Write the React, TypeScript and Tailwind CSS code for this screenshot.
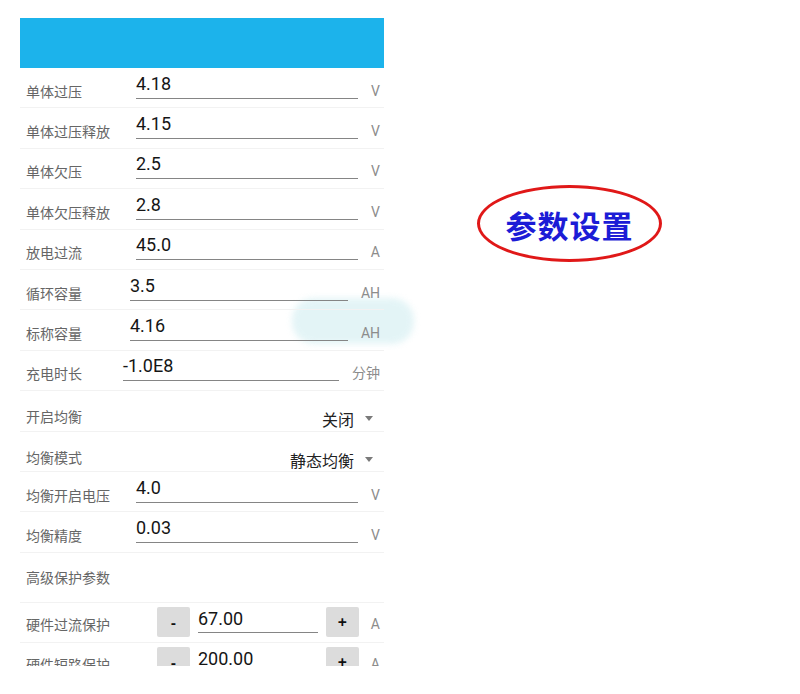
import React from 'react'

type FieldRow = {
  kind: 'field'
  label: string
  value: string
  unit: string
  labelW: number
}

type SelectRow = {
  kind: 'select'
  label: string
  value: string
}

type Row = FieldRow | SelectRow

const rows: Row[] = [
  { kind: 'field', label: '单体过压', value: '4.18', unit: 'V', labelW: 116 },
  { kind: 'field', label: '单体过压释放', value: '4.15', unit: 'V', labelW: 116 },
  { kind: 'field', label: '单体欠压', value: '2.5', unit: 'V', labelW: 116 },
  { kind: 'field', label: '单体欠压释放', value: '2.8', unit: 'V', labelW: 116 },
  { kind: 'field', label: '放电过流', value: '45.0', unit: 'A', labelW: 116 },
  { kind: 'field', label: '循环容量', value: '3.5', unit: 'AH', labelW: 110 },
  { kind: 'field', label: '标称容量', value: '4.16', unit: 'AH', labelW: 110 },
  { kind: 'field', label: '充电时长', value: '-1.0E8', unit: '分钟', labelW: 103 },
  { kind: 'select', label: '开启均衡', value: '关闭' },
  { kind: 'select', label: '均衡模式', value: '静态均衡' },
  { kind: 'field', label: '均衡开启电压', value: '4.0', unit: 'V', labelW: 116 },
  { kind: 'field', label: '均衡精度', value: '0.03', unit: 'V', labelW: 116 },
]

const steppers = [
  { label: '硬件过流保护', value: '67.00', unit: 'A' },
  { label: '硬件短路保护', value: '200.00', unit: 'A' },
]

const cjk = "font-['Noto_Sans_CJK_SC','Noto_Sans',sans-serif]"
const num = "font-['Roboto','Noto_Sans_CJK_SC',sans-serif]"

function Field({ row }: { row: FieldRow }) {
  return (
    <div className="flex h-[40.4px] items-center pt-[7px] border-b border-[#f2f2f2]">
      <div className={`shrink-0 pl-[6px] text-[14px] text-[#666] ${cjk}`} style={{ width: row.labelW }}>
        {row.label}
      </div>
      {/* value with underline */}
      <div className={`flex-1 mb-[11px] pb-[4px] border-b border-[#858585] text-[18px] leading-[21px] text-[#151515] ${num}`}>
        {row.value}
      </div>
      <div className={`ml-[13px] pr-[4px] text-[14px] text-[#8c8c8c] ${num}`}>{row.unit}</div>
    </div>
  )
}

function Select({ row }: { row: SelectRow }) {
  return (
    <div className="flex h-[40.4px] items-center pt-[12px] border-b border-[#f2f2f2]">
      <div className={`flex-1 pl-[6px] text-[14px] text-[#666] ${cjk}`}>{row.label}</div>
      <div className={`text-[16px] text-[#222] ${cjk} mt-[5px]`}>{row.value}</div>
      <svg className="ml-[11px] mr-[11px] mt-[4px]" width="8" height="5" viewBox="0 0 8 5">
        <path d="M0 0h8L4 5z" fill="#7a7a7a" />
      </svg>
    </div>
  )
}

function Stepper({ s }: { s: (typeof steppers)[number] }) {
  return (
    <div className="flex h-[40px] shrink-0 items-center border-b border-[#f2f2f2]">
      <div className={`w-[137px] shrink-0 pl-[6px] pt-[4px] text-[14px] text-[#666] ${cjk}`}>{s.label}</div>
      <div className="flex h-[30px] w-[33px] items-center justify-center rounded-[2px] bg-[#dcdcdc] text-[15px] font-bold text-[#111]">-</div>
      <div className={`ml-[8px] flex-1 mb-[4px] pb-[3px] border-b border-[#858585] text-[18px] leading-[21px] text-[#151515] ${num}`}>
        {s.value}
      </div>
      <div className="ml-[8px] flex h-[30px] w-[33px] items-center justify-center rounded-[2px] bg-[#dcdcdc] text-[16px] font-bold text-[#111]">+</div>
      <div className={`ml-[12px] pr-[4px] pt-[4px] text-[14px] text-[#8c8c8c] ${num}`}>{s.unit}</div>
    </div>
  )
}

export default function App() {
  return (
    <div className="relative flex h-[694px] w-[800px] items-start bg-white">
      {/* watermark smudge from the photo, sits behind the screen text */}
      <div className="pointer-events-none absolute left-[292px] top-[298px] z-0 h-[46px] w-[122px] rounded-[22px] bg-[#d8f0f3] opacity-70 blur-[3px]" />

      {/* phone screen */}
      <div className="relative z-10 ml-[20px] mt-[18px] flex h-[648px] w-[364px] flex-col overflow-hidden">
        <div className="h-[50px] shrink-0 bg-[#1cb3eb]" />
        <div className="flex flex-col">
          {rows.map((r, i) =>
            r.kind === 'field' ? <Field key={i} row={r} /> : <Select key={i} row={r} />
          )}
          <div className="flex h-[50px] shrink-0 items-center border-b border-[#f2f2f2]">
            <div className={`pl-[6px] text-[14px] text-[#666] ${cjk}`}>高级保护参数</div>
          </div>
          {steppers.map((s, i) => (
            <Stepper key={i} s={s} />
          ))}
        </div>
      </div>

      {/* annotation */}
      <div className="relative z-10 ml-[93px] mt-[185px] flex h-[77px] w-[185px] items-center justify-center rounded-[50%] border-[3px] border-[#e01818]">
        <span className={`text-[31px] font-bold tracking-[1px] text-[#1c1cd6] ${cjk} mt-[4px]`}>参数设置</span>
      </div>
    </div>
  )
}
